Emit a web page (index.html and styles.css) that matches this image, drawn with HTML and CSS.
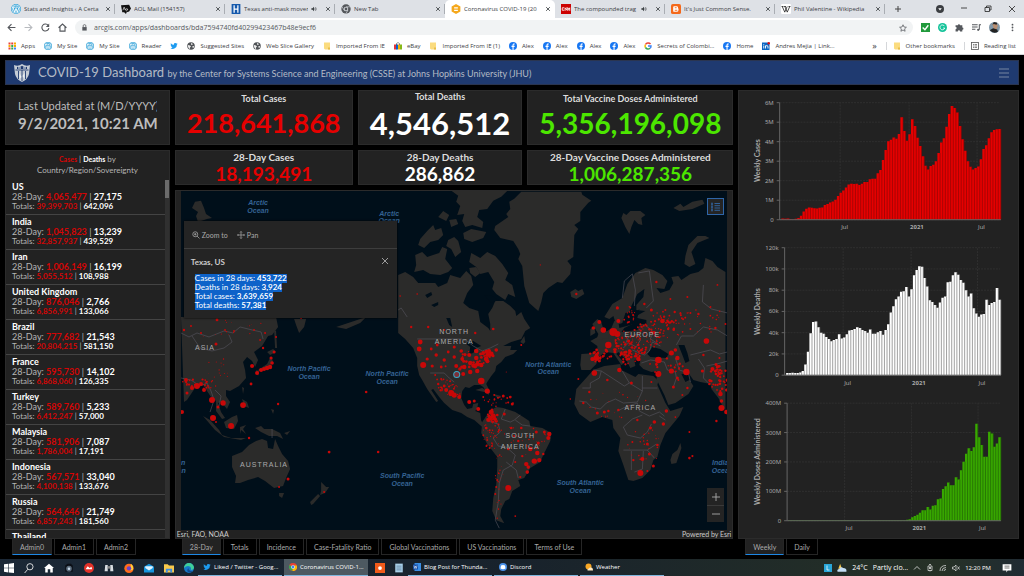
FILE: index.html
```html
<!DOCTYPE html>
<html lang="en">
<head>
<meta charset="utf-8">
<title>Coronavirus COVID-19 Dashboard</title>
<link rel="stylesheet" href="styles.css">
</head>
<body>
<svg class="defs" aria-hidden="true">
  <symbol id="wp" viewBox="0 0 16 16"><circle cx="8" cy="8" r="8" fill="#35a3d8"/><circle cx="8" cy="8" r="6.4" fill="none" stroke="#fff"/><path d="M3 5l3 8 2-6 2 6 3-8M2.500 5h4M7 5h4" fill="none" stroke="#fff" stroke-width="1.500"/></symbol>
  <symbol id="fb" viewBox="0 0 16 16"><circle cx="8" cy="8" r="8" fill="#1877f2"/><path d="M7 16v-6H5V7.500h2V6c0-2 1-3.200 3.200-3.200h1.300V5h-1.200C9.300 5 9.200 5.500 9.200 6.200v1.300h2.300L11.100 10H9.200v6z" fill="#fff"/></symbol>
  <symbol id="globe" viewBox="0 0 16 16"><circle cx="8" cy="8" r="7.500" fill="#505357"/><path d="M2 6l4 1 2 2-2 2v3C3 13 1.500 10 2 6zM8 2l4 2-2 2-2-1zM11 8l3 0-1 4-2-1z" fill="#eee"/></symbol>
  <symbol id="chrome" viewBox="0 0 16 16"><circle cx="8" cy="8" r="8" fill="#e94235"/><path d="M8 8L1 4.200A8 8 0 0 0 7 16z" fill="#34a853"/><path d="M8 8L7 16A8 8 0 0 0 15.500 5H8z" fill="#fbbc04"/><circle cx="8" cy="8" r="3.700" fill="#fff"/><circle cx="8" cy="8" r="2.800" fill="#4285f4"/></symbol>
  <symbol id="newtab" viewBox="0 0 16 16"><circle cx="8" cy="8" r="7.500" fill="#54575b"/><circle cx="8" cy="8" r="3.600" fill="#dee1e6"/><circle cx="8" cy="8" r="2.300" fill="#54575b"/><path d="M8 4.500h7M5 10L1.500 4M11 10l-3.500 6" stroke="#dee1e6"/></symbol>
  <symbol id="folder" viewBox="0 0 16 16"><path d="M2 1h12v14H4l-2-2z" fill="#fbdc7f"/><path d="M10 11h4v4h-4z" fill="#e8bd4a"/></symbol>
  <symbol id="twitter" viewBox="0 0 24 24"><path fill="#1d9bf0" d="M23 5a9 9 0 0 1-2.600.7 4.500 4.500 0 0 0 2-2.500 9 9 0 0 1-2.900 1.100A4.500 4.500 0 0 0 11.800 8.400 12.900 12.900 0 0 1 2.500 3.700a4.500 4.500 0 0 0 1.400 6 4.500 4.500 0 0 1-2-.6 4.500 4.500 0 0 0 3.600 4.500 4.500 4.500 0 0 1-2 .1 4.500 4.500 0 0 0 4.200 3.100A9.100 9.100 0 0 1 1 18.700a12.900 12.900 0 0 0 19.800-11.500A9 9 0 0 0 23 5z"/></symbol>
  <symbol id="x" viewBox="0 0 16 16"><path d="M3 3l10 10M13 3L3 13" stroke="currentColor" stroke-width="2.200"/></symbol>
  <symbol id="sound" viewBox="0 0 16 16"><path d="M1 6h3l4-4v12L4 10H1z" fill="currentColor"/><path d="M10 5q2 3 0 6M12 3q4 5 0 10" fill="none" stroke="currentColor" stroke-width="1.500"/></symbol>
</svg>

<header class="browser">
  <nav class="tabs" aria-label="Browser tabs">
    <div class="tab"><svg class="fav"><use href="#wp"/></svg><span>Stats and Insights ‹ A Certa</span><button aria-label="Close tab"><svg><use href="#x"/></svg></button></div>
    <div class="tab"><svg class="fav" viewBox="0 0 16 16"><path d="M0 2l13-1 3 6-3 5-4 1-1 3-3-3H2z" fill="#111"/><path d="M3 10l2-5 2 5M9 7.500a1.500 1.500 0 1 0 .1 0" fill="none" stroke="#fff"/></svg><span>AOL Mail (154157)</span><button aria-label="Close tab"><svg><use href="#x"/></svg></button></div>
    <div class="tab"><svg class="fav" viewBox="0 0 16 16"><rect x="1" width="14" height="16" fill="#1459ac"/><path d="M5 2v12M11 2v12M4 8h8" stroke="#fff" stroke-width="2"/></svg><span>Texas anti-mask mover</span><svg class="audio"><use href="#sound"/></svg><button aria-label="Close tab"><svg><use href="#x"/></svg></button></div>
    <div class="tab"><svg class="fav"><use href="#newtab"/></svg><span>New Tab</span><button aria-label="Close tab"><svg><use href="#x"/></svg></button></div>
    <div class="tab active"><svg class="fav" viewBox="0 0 16 16"><path d="M8 0l7 4v8l-7 4-7-4V4z" fill="#f5a81c"/><path d="M5 5h6v2H5zM5 9h6v2H5z" fill="#fff"/></svg><span>Coronavirus COVID-19 (20</span><button aria-label="Close tab"><svg><use href="#x"/></svg></button></div>
    <div class="tab"><svg class="fav" viewBox="0 0 16 16"><rect width="16" height="16" fill="#c00"/><path d="M5 6H2v4h3M6.500 11V6l3 4V5M11 11V6l1.500 3L14 6v5" fill="none" stroke="#fff" stroke-width="1.300"/></svg><span>The compounded trag</span><svg class="audio"><use href="#sound"/></svg><button aria-label="Close tab"><svg><use href="#x"/></svg></button></div>
    <div class="tab"><svg class="fav" viewBox="0 0 16 16"><rect width="16" height="16" rx="3" fill="#f4681a"/><path d="M5 3.500h4a2 2 0 0 1 2 3q1.500.5 1 3a3 3 0 0 1-3 3H5q-1.500 0-1.500-1.500V5q0-1.500 1.500-1.500z" fill="#fff"/><path d="M6 6h3M6 10h4" stroke="#f4681a" stroke-width="1.500"/></svg><span>It's Just Common Sense.</span><button aria-label="Close tab"><svg><use href="#x"/></svg></button></div>
    <div class="tab"><svg class="fav" viewBox="0 0 16 16"><rect width="16" height="16" rx="2" fill="#fff"/><path d="M2 4l4 9 2-5 2 5 4-9M6 4l2 4 2-4M1 4h3M5 4h3M12 4h3" fill="none" stroke="#111" stroke-width="1.200"/></svg><span>Phil Valentine - Wikipedia</span><button aria-label="Close tab"><svg><use href="#x"/></svg></button></div>
    <button class="plus" aria-label="New tab"><svg viewBox="0 0 16 16"><path d="M8 2v12M2 8h12" stroke="#444" stroke-width="2"/></svg></button>
    <div class="window">
      <button aria-label="Search tabs"><svg viewBox="0 0 16 16"><circle cx="8" cy="8" r="8" fill="#3a3d41"/><path d="M4.500 6.500h7L8 11z" fill="#fff"/></svg></button>
      <button aria-label="Minimise"><svg viewBox="0 0 16 16"><path d="M2 6h12" stroke="#222" stroke-width="1.600"/></svg></button>
      <button aria-label="Restore"><svg viewBox="0 0 16 16"><path d="M2 5h9v8H2zM5 5V2h9v8h-3" fill="none" stroke="#222" stroke-width="1.600"/></svg></button>
      <button aria-label="Close"><svg viewBox="0 0 16 16"><path d="M2 2l12 12M14 2L2 14" stroke="#222" stroke-width="1.600"/></svg></button>
    </div>
  </nav>
  <div class="toolbar">
    <button aria-label="Back"><svg viewBox="0 0 16 16"><path d="M15 8H2M8 2L2 8l6 6" fill="none" stroke="#55585d" stroke-width="2"/></svg></button>
    <button aria-label="Forward"><svg viewBox="0 0 16 16"><path d="M1 8h13M8 2l6 6-6 6" fill="none" stroke="#b8bbbf" stroke-width="2"/></svg></button>
    <button aria-label="Reload"><svg viewBox="0 0 16 16"><path d="M13 4.500A6.200 6.200 0 1 0 14 9" fill="none" stroke="#55585d" stroke-width="2"/><path d="M14.500 1v6h-6z" fill="#55585d"/></svg></button>
    <button aria-label="Home"><svg viewBox="0 0 16 16"><path d="M1 8.500L8 2l7 6.500M3.500 7v7.500h9V7" fill="none" stroke="#55585d" stroke-width="2"/></svg></button>
    <label class="address"><svg viewBox="0 0 16 16"><path d="M3 7h10v8H3z" fill="#55585d"/><path d="M5 7V4q0-2.500 3-2.500T11 4v3" fill="none" stroke="#55585d" stroke-width="1.800"/></svg>
      <input aria-label="Address" value="arcgis.com/apps/dashboards/bda7594740fd40299423467b48e9ecf6">
      <svg viewBox="0 0 16 16"><path d="M8 1.500l2 4.500 4.800.5-3.600 3.200 1 4.800L8 12l-4.200 2.500 1-4.800L1.200 6.500 6 6z" fill="none" stroke="#55585d" stroke-width="1.500"/></svg></label>
    <div class="extensions">
      <svg viewBox="0 0 16 16"><rect width="16" height="16" fill="#219a3c"/><path d="M3 8l4 4 6-8" fill="none" stroke="#fff" stroke-width="2.500"/></svg>
      <svg viewBox="0 0 16 16"><circle cx="8" cy="8" r="8" fill="#15c39a"/><path d="M11.500 5.500A4.300 4.300 0 1 0 12 9H9" fill="none" stroke="#fff" stroke-width="1.500"/></svg>
      <svg viewBox="0 0 16 16"><path d="M1 4h4a2 2 0 1 1 4 0h4v4a2 2 0 1 1 0 4v3H9a2 2 0 1 0-4 0H1v-4a2 2 0 1 0 0-4z" fill="#55585d"/></svg>
      <svg viewBox="0 0 16 16"><path d="M0 3h10M0 7h10M0 11h6M13 12V3h3" fill="none" stroke="#55585d" stroke-width="1.800"/><circle cx="11" cy="12" r="2" fill="#55585d"/></svg>
      <svg class="avatar" viewBox="0 0 16 16"><circle cx="8" cy="8" r="8" fill="#8298a8"/><path d="M5 3l5-2 3 4-2 6-4-1z" fill="#b98f72"/><path d="M1 12l5-3 6 2 1 3q-6 4-12-2zM5 4l2-4 5 1-1 3-4-1z" fill="#222"/></svg>
      <svg viewBox="0 0 16 16"><g fill="#55585d"><circle cx="8" cy="3" r="1.600"/><circle cx="8" cy="8" r="1.600"/><circle cx="8" cy="13" r="1.600"/></g></svg>
    </div>
  </div>
  <nav class="bookmarks" aria-label="Bookmarks">
    <a href="#"><svg viewBox="0 0 16 16"><path d="M1 1h4v4H1zM1 11h4v4H1zM6.500 1h4v4h-4z" fill="#ea4335"/><path d="M12 1h4v4h-4zM12 6h4v4h-4zM1 6h4v4H1z" fill="#f9ab00"/><path d="M6.500 6h4v4h-4zM6.500 11h4v4h-4z" fill="#34a853"/><path d="M12 11h4v4h-4z" fill="#4285f4"/></svg>Apps</a>
    <a href="#"><svg><use href="#wp"/></svg>My Site</a>
    <a href="#"><svg><use href="#wp"/></svg>My Site</a>
    <a href="#"><svg><use href="#wp"/></svg>Reader</a>
    <a href="#" aria-label="Twitter"><svg><use href="#twitter"/></svg></a>
    <a href="#"><svg><use href="#globe"/></svg>Suggested Sites</a>
    <a href="#"><svg><use href="#globe"/></svg>Web Slice Gallery</a>
    <a href="#"><svg><use href="#folder"/></svg>Imported From IE</a>
    <a href="#"><svg viewBox="0 0 16 16"><path d="M0 5h5v10H0z" fill="#e53238"/><path d="M4 5h4v10H4z" fill="#0064d2"/><path d="M8 5h4v10H8z" fill="#f5af02"/><path d="M12 5h4v10h-4z" fill="#86b817"/><path d="M5 6V3q3-4 6 0v3" fill="none" stroke="#333"/></svg>eBay</a>
    <a href="#"><svg><use href="#folder"/></svg>Imported From IE (1)</a>
    <a href="#"><svg><use href="#fb"/></svg>Alex</a>
    <a href="#"><svg><use href="#fb"/></svg>Alex</a>
    <a href="#"><svg><use href="#fb"/></svg>Alex</a>
    <a href="#"><svg><use href="#fb"/></svg>Alex</a>
    <a href="#"><svg viewBox="0 0 16 16" fill="none" stroke-width="3"><path d="M13 4A6 6 0 0 0 3 5" stroke="#ea4335"/><path d="M3 5a6 6 0 0 0 0 6" stroke="#fbbc04"/><path d="M3 11a6 6 0 0 0 9 1.500" stroke="#34a853"/><path d="M12 12.500Q14 11 14 8H8" stroke="#4285f4"/></svg>Secrets of Colombi...</a>
    <a href="#"><svg><use href="#fb"/></svg>Home</a>
    <a href="#"><svg viewBox="0 0 16 16"><rect y="1" width="15" height="15" fill="#0a66c2"/><path d="M3.500 7v6M7 13V7M7 10q0-3 2.500-3T12 10v3M3.500 4v1.500" fill="none" stroke="#fff" stroke-width="1.800"/><circle cx="13.500" cy="2.500" r="2.500" fill="#d11"/></svg>Andres Mejia | Link...</a>
    <button class="more" aria-label="More bookmarks">»</button>
    <a href="#" class="ruled"><svg><use href="#folder"/></svg>Other bookmarks</a>
    <a href="#" class="ruled"><svg viewBox="0 0 16 16"><rect x="1" y="1" width="14" height="14" fill="none" stroke="#555" stroke-width="1.600"/><path d="M4 5h2M4 8h2M4 11h2M7 5h5M7 8h5M7 11h5" stroke="#555" stroke-width="1.400"/></svg>Reading list</a>
  </nav>
</header>

<main class="dashboard">
  <header class="banner">
    <svg class="crest" viewBox="0 0 18 18"><path d="M1 1q4 2 8-1 4 3 8 1l-1 9q-1 5-7 8-6-3-7-8z" fill="#c5ccd5"/><path d="M2.500 6h13M9 6v11M5.500 7v8M12.500 7v8" stroke="#1f3a70" stroke-width=".9"/><path d="M4 2.800q3 1 5-1 2 2 5 1V5H4z" fill="#1f3a70"/><path d="M5 3.500h3v1H5zM10 3.500h3v1h-3zM6.500 9l2 4-2 2zM11.500 9l-2 3 2 3z" fill="#eef1f4"/></svg>
    <h1>COVID-19 Dashboard <small>by the Center for Systems Science and Engineering (CSSE) at Johns Hopkins University (JHU)</small></h1>
    <button aria-label="Menu"><svg viewBox="0 0 10 10"><path d="M0 1h10M0 5h10M0 9h10" stroke="#8d99ae" stroke-width=".8"/></svg></button>
  </header>

  <section class="column side">
    <div class="card updated"><p>Last Updated at (M/D/YYYY)</p><strong>9/2/2021, 10:21 AM</strong></div>
    <div class="card countries">
      <h2><span><b class="red">Cases</b> | <b>Deaths</b> by</span><span>Country/Region/Sovereignty</span></h2>
      <ul id="countries"></ul>
    </div>
    <nav class="switch indent"><button class="on">Admin0</button><button>Admin1</button><button>Admin2</button></nav>
  </section>

  <section class="column centre">
    <div class="totals">
      <div class="card stat"><h3>Total Cases</h3><strong class="red">218,641,868</strong></div>
      <div class="card stat large"><h3>Total Deaths</h3><strong>4,546,512</strong></div>
      <div class="card stat medium"><h3>Total Vaccine Doses Administered</h3><strong class="green">5,356,196,098</strong></div>
      <div class="card stat short"><h3>28-Day Cases</h3><strong class="red">18,193,491</strong></div>
      <div class="card stat short"><h3>28-Day Deaths</h3><strong>286,862</strong></div>
      <div class="card stat short"><h3>28-Day Vaccine Doses Administered</h3><strong class="green">1,006,287,356</strong></div>
    </div>
    <div class="card mapcard">
      <svg class="map" viewBox="181 191 546 339" preserveAspectRatio="xMidYMid slice" role="img" aria-label="World map of cases">
        <g class="land">
          <path d="M398 275l7-3 8 5 5 6 17 0 3 4 9-4 3-8 10 3 6-7 5 5 2 9-6 8-4 10 6 5 9 3 2 11 8 6 2 3 0-7-2-10 4-6 3-7 8 0 7 5 5 5 1 5 5-4 3 7 6 9-5 3-4 8-10 3-8 4 8 0-1 4 7 0-4 4-8 3-4 5-5 4-1 5-4 5-4 6-1 2 4 8-2 3-5-8-3-2-6 0-5 3-4-1-3 4-1 7 3 7 3 4 5-1 1-4 5-1-1 5-2 3 5 2 1 8 4 4 4 0 4 3-3 2-8-3-8-7-7-3-6-4-9-3-8-7-5-6-6-8-2 1 7 11-2 1-9-13-5-9-3-5-2-9 0-8-4-10-8-9-7-6z"/>
          <path d="M510 209l-4 5 2 3-13 9-1 4 6 8 13 3 5 8 2 5-2 5 4 7 2 20 5 17 9 8 3-9 2-9 5-5 9-6 5 1 8-9 1-8-4-5 6-4 1-22 4-6-4-4 6-4 0-9 8-9 3-2-9-6-1-3h-60l-7 7-5 3z"/>
          <path d="M450 190h58l-7 7-8 4-6 8-8 1-2 7 6 5-1 6-10-3-7 2-3-6 2-7-7 1 3-9-4-4 2-6zM463 233l8-4 15 3-3 6-11 4-8-3zM471 253l9 5 7-6 8 4 7 8 6 9-3 7 7 5 3 12-7-3-3 6-9-6-4-5 2-7-6-10-8 2-4-7-7-5z"/>
          <path d="M415 255l7-3 5 5 12-4 3-6 5 2-2 10 7 9-4 4-8 3-10-1-7-4-9 2 2-7zM420 239l7-8 6-6 2 5 6-2 2 7-5 5-8 2-6 6-6-3zM438 217l5-6 6 4-3 6zM449 220l7-1 2 5-7 3zM448 240l6-3 4 4 3 11-6 5-4-8-5-3zM469 268l7-1 4 6-5 4-5-4z"/>
          <path d="M570 292l5-3 3 2 4-2 2 5-8 5-5-2zM621 218l2-5 3 2 4-4 10 0 5 4-4 3 1 7-4-1-4-4-3 7-2 7-4-7zM673 208l7-4 3 3 9-5 10-2 2 4-12 5-13 2zM684 264l1-8 3-11 9-9 8 0 4 2-12 5-6 9 4 12-6 3z"/>
          <path d="M612 304l10-6 5-14 8-11 10-5 8 2 9 5 5 6-3 8-8-1 4 5 9-3 4-7-2-6 7-1 3 4 9-6 8-2 5-4 2-10 7 3 5 6 8 5V411l-3-5-4-8-7-9-1-5-10-2-7-2-5-7-7 1 4 8 4-2 4 6-5 8-13 9-7 2-4-10-8-16 2-8-7 1-8-3-4-4 1-6-6 1 1 6-5 2-4-8-8-8-2 2 8 9-3 2-8-12-8-1-7 5-2 7-6 6-9 0-1-5 1-11 16-1 0-7-7-5 13-7 8-6 3-7 4 1 1 6 11-3 8-3-2-6 9-5-9-1 0-5 7-8 1-8-7 5-6 12-2 6-4 1-3 10-6 2-3-9-4 3-5-2z"/>
          <path d="M592 324l5-5 4 3 2 7 6 4-1 5-12 2 2-6zM590 329l4-2 1 6-5 3z"/>
          <path d="M593 370l11-4 16-2 1 6 14 7 3-3 15 2 5 5-1 4 8 18 5 8 13-4-4 9-14 17-5 12-3 12-4 3-3 10-8 8-9 3-5-1-5-15-5-14 2-13-7-10-1-8-10-3-12 5-11-8-5-10 2-15zM672 454l5-4 3-7 1 5-5 15-5 1-1-4z"/>
          <path d="M491 410l5-3 7 1 12 4 8 5 6 4 1 5 12 2 9 5-1 8-7 14-3 7-10 6-6 10-6 2 2 6-8 5-3 8-4 2-4 8-1 7 4 7-8-3-4-9 1-13 3-14 1-17 0-10-10-13-6-11 1-11 4-6z"/>
          <path d="M181 317h95l2 10-6 8-4 1-6 10-8 6 4 8-3 7-3-6-5-4-4 5 2 8 1 8-7 8-9 5-4-1 0 6 4 6-3 7-6-7-3 1 3 9 4 6-3 1-6-8 0-10-5-4-8-12-8 3-8 12-3 2z"/>
          <path d="M294 319h12l-2 8-5 6-3-8zM274 330l2 1 1 17-2 0zM267 352l6-3 3 3-6 3zM271 356l2 6-6 7-8 2-1-1 9-6zM256 370l3 1-1 5zM336 327l18-6 12-4-6 6-14 6zM242 387l2 1-1 6zM242 399l5 3 2 6-5-2z"/>
          <path d="M203 416l7 4 9 10 3 5 9 3 15 0-5 2-17-3-9-7zM224 422l8-5 5-2 1 6-4 8-8-1zM240 427l6-2-3 4 3 5-5-4-1 4zM255 428l6-2 3 3 8 0 8 4 3 6-6-3-8 0-8-4zM284 433l6-2-3 4zM195 202l6-1 3 7 2 6 6 4-5 1-9 3-2-6 2-4-6-4zM271 409l3 1-1 4z"/>
          <path d="M232 456l10-4 7-7 7-4 6-2 5 2 1 7 5 1 2-10 3 7 4 8 6 7 2 8-4 9-3 8-9 2-9-7-7-4-10 3-8 3-5 0 1-7-4-9zM279 493l5 0-2 5-3-2zM321 482l5 5 3 0-4 6-5 2 1-4zM318 494l2 2-7 8-2 1-1-3z"/>
          <path d="M475 390l7-2 7 4-5 0zM493 394l8 2-3 3zM520 342l4-6 1 6-2 2z"/>
        </g>
        <g class="sea"><path d="M647 354l5-7 8 2 8 5-2 4-16-1zM678 345l6 0 3 8 2 8-4 2-3-8zM621 332l16-2 3-6 6 0 0-4-9-2 2-9-4 5-3 10-8 4zM484 295l8 1 6 4-7 3zM425 295l6-3 1 3-5 3zM431 305l7-3 0 3-4 2zM446 318l4 0 2 9-3-2zM465 343l8-2 8 5-5 2-3 5-4 1 1-7z"/></g>
        <g class="borders"><path d="M417 339h44l7 3 5 4 9 5 8-3 8-4M398 310l3-2 6 9M430 373l14 0 5 5 5 4M181 333l8 4 8-4 12 4 15-6 9 2 7-6 12 3 9 2 2 7M192 336l8 12 12 3 12-3 8-6-3-7M181 378l10 2 9 6 7-3 4 8 3 9-4 12M215 390l6 6-2 10M272 429v9M505 409l-4 10 9 3 4-2 6-5M488 421l10 3 2 8-7 6 5 8 8 1 9 8-3 10-9 5-4 13-1 19-3 18 4 8M506 462l10 8 2 8M515 420l7 5 8 1M593 370l8 1-2 7-9 5v5h-8M601 371l23 15 5-3-7-12M629 383l13 8V376M642 388h15M642 391l-5 11-14 1-8-4-9 4-6 6-9-2-5-5-7-1M617 411l8-4 12-4 2 8 10 5 10-4 5 4M659 416l6 4M642 415l-10 4-9 8 4 8 13 3 7-6 4-8M623 450h24l9-6M631 451v19M643 451l-1 18-8 3M647 450l7 8M623 348l5-5 8 4 4-7-3-6-9 3-3 7M632 350l12 5 5-4 3-9 8 4M622 298l2-17 8-7 3 16-1 16M638 273l11-2 4 30-7 7M646 326l7 6-3 7 8 5M641 363l9-3 14 2 3 8 8 2 1 6-3 9M675 358l4 12 9 3 2 9M676 345l5-9 12 0 10-9 14 3 10 6M703 285l-1 17 9 7 16 4M690 355l12-3 8-2 9 4 8-2M698 359l6 9-1 10 5 5M706 366l14-3 7-2"/></g>
        <g id="cases" class="cases"></g>
        <circle cx="456.500" cy="374.500" r="3" class="picked"/>
        <g class="ocean">
          <text><tspan x="258" y="205">Arctic</tspan><tspan x="258" y="213">Ocean</tspan></text>
          <text><tspan x="389" y="216">Arctic</tspan><tspan x="389" y="223">Ocean</tspan></text>
          <text><tspan x="309" y="371">North Pacific</tspan><tspan x="309" y="379">Ocean</tspan></text>
          <text><tspan x="387" y="376">North Pacific</tspan><tspan x="387" y="384">Ocean</tspan></text>
          <text><tspan x="548" y="367">North Atlantic</tspan><tspan x="548" y="374">Ocean</tspan></text>
          <text><tspan x="402" y="478">South Pacific</tspan><tspan x="402" y="486">Ocean</tspan></text>
          <text><tspan x="580" y="485">South Atlantic</tspan><tspan x="580" y="493">Ocean</tspan></text>
          <text><tspan x="722" y="465">Indian</tspan><tspan x="722" y="473">Ocean</tspan></text>
          <text><tspan x="175" y="465">Indian</tspan><tspan x="175" y="473">Ocean</tspan></text>
        </g>
        <g class="continent">
          <text x="205" y="350">ASIA</text><text x="264" y="467">AUSTRALIA</text>
          <text><tspan x="454" y="334">NORTH</tspan><tspan x="454" y="344">AMERICA</tspan></text>
          <text><tspan x="520" y="438">SOUTH</tspan><tspan x="520" y="449">AMERICA</tspan></text>
          <text x="642" y="337">EUROPE</text><text x="640" y="410">AFRICA</text>
        </g>
      </svg>
      <div class="attribution"><span>Esri, FAO, NOAA</span><span>Powered by Esri</span></div>
      <article class="popup">
        <div class="actions">
          <button><svg viewBox="0 0 16 16"><circle cx="6.500" cy="6.500" r="5" fill="none" stroke="#aaa" stroke-width="1.500"/><path d="M10 10l5 5M4 6.500h5M6.500 4v5" stroke="#aaa" stroke-width="1.500"/></svg>Zoom to</button>
          <button><svg viewBox="0 0 16 16"><path d="M8 1v14M1 8h14M6 3l2-2 2 2M6 13l2 2 2-2M3 6L1 8l2 2M13 6l2 2-2 2" fill="none" stroke="#aaa" stroke-width="1.400"/></svg>Pan</button>
        </div>
        <h2>Texas, US</h2>
        <button class="dismiss" aria-label="Close popup"><svg viewBox="0 0 8 8"><path d="M1 1l6 6M7 1L1 7" stroke="#aaa" stroke-width=".9"/></svg></button>
        <p><mark>Cases in 28 days: <b>453,722</b></mark><mark>Deaths in 28 days: <b>3,924</b></mark><mark>Total cases: <b>3,639,659</b></mark><mark>Total deaths: <b>57,381</b></mark></p>
      </article>
      <button class="legend" aria-label="Legend"><svg viewBox="0 0 10 10"><path d="M1 .5v9M3.500 1.500H9M3.500 3.700H9M3.500 6H9M3.500 8.300H9" stroke="#3571b8" stroke-width=".8"/><path d="M0 2h2M0 5h2M0 8h2" stroke="#3571b8" stroke-width=".8"/></svg></button>
      <div class="zoom"><button aria-label="Zoom in"><svg viewBox="0 0 8 8"><path d="M4 0v8M0 4h8" stroke="#aaa" stroke-width=".9"/></svg></button><button aria-label="Zoom out"><svg viewBox="0 0 8 8"><path d="M0 4h8" stroke="#aaa" stroke-width=".9"/></svg></button></div>
    </div>
    <nav class="switch indent"><button class="on">28-Day</button><button>Totals</button><button>Incidence</button><button>Case-Fatality Ratio</button><button>Global Vaccinations</button><button>US Vaccinations</button><button>Terms of Use</button></nav>
  </section>

  <section class="column side">
    <div class="card charts" id="charts"></div>
    <nav class="switch indent"><button class="on">Weekly</button><button>Daily</button></nav>
  </section>
</main>

<footer class="taskbar">
  <div class="pins">
    <button aria-label="Start"><svg viewBox="0 0 16 16"><path d="M0 2l7-1v6.500H0zM8 1l8-1v7.500H8zM0 8.500h7V15l-7-1zM8 8.500h8V16l-8-1z" fill="#fff"/></svg></button>
    <button aria-label="Search"><svg viewBox="0 0 16 16"><circle cx="9.500" cy="6" r="5" fill="none" stroke="#eee" stroke-width="1.400"/><path d="M6 10l-5 6" stroke="#eee" stroke-width="1.400"/></svg></button>
    <button aria-label="Home"><svg viewBox="0 0 16 16"><path d="M0 8l8-7 8 7h-2v7h-4v-5H6v5H2V8z" fill="#fff"/></svg></button>
    <button aria-label="Camera"><svg viewBox="0 0 16 16"><path d="M2 4l4-3h5l3 3v10H2z" fill="#0b0f16"/><circle cx="8" cy="9" r="4.500" fill="#5c6c7c"/><circle cx="8" cy="9" r="2" fill="#c7d7e7"/></svg></button>
    <button aria-label="Security"><svg viewBox="0 0 16 16"><circle cx="8" cy="8" r="8" fill="#e23128"/><path d="M3 9l3-4 3 3 3-2 1 4H3z" fill="#fff"/></svg></button>
    <button aria-label="Binoculars"><svg viewBox="0 0 16 16"><path d="M2 3h4v10H1zM10 3h4l1 10h-5z" fill="#d8dde2"/><path d="M6 5h4v4H6z" fill="#888"/></svg></button>
    <button aria-label="Firefox"><svg viewBox="0 0 16 16"><circle cx="8" cy="8.500" r="7.500" fill="#ff6b1a"/><path d="M11 1q5 4 3 10l-4 1z" fill="#ffd23a"/><circle cx="8" cy="8.500" r="3.500" fill="#6a43c9"/></svg></button>
    <button aria-label="Mail"><svg viewBox="0 0 16 16"><path d="M0 6l8-5 8 5v9H0z" fill="#1594dd"/><path d="M2 5h12v3l-6 4-6-4z" fill="#dff2ff"/></svg></button>
    <button aria-label="Files"><svg viewBox="0 0 16 16"><path d="M0 2h6l2 2h8v11H0z" fill="#f8c94c"/><path d="M3 9h10v6h-3v-3H6v3H3z" fill="#3e8de0"/></svg></button>
    <button aria-label="Edge"><svg viewBox="0 0 16 16"><circle cx="8" cy="8" r="8" fill="#1678c9"/><path d="M0 8a8 8 0 0 1 16 0q-1 3-5 3 1-5-3-6T0 8z" fill="#3fcf9a"/><path d="M7 8q0 5 7 5-4 4-8 1-2-3 1-6z" fill="#124c91"/></svg></button>
  </div>
  <button class="task"><svg><use href="#twitter"/></svg>Liked / Twitter - Goog...</button>
  <button class="task current"><svg><use href="#chrome"/></svg>Coronavirus COVID-1...</button>
  <div class="pins pair">
    <button aria-label="Reader"><svg viewBox="0 0 16 16"><rect width="16" height="16" fill="#f05a1a"/><circle cx="8" cy="8" r="3" fill="#fff"/></svg></button>
    <button aria-label="Notepad"><svg viewBox="0 0 16 16"><path d="M2 1h12v14H2z" fill="#a8cfe8"/><path d="M4 5h8M4 8h8M4 11h8" stroke="#496c8c"/></svg></button>
  </div>
  <button class="task"><svg viewBox="0 0 16 16"><path d="M3 0h13v16H3z" fill="#3a8ee6"/><path d="M0 3h10v10H0z" fill="#174ea6"/><path d="M2 5l1.500 6L5 6l1.500 5L8 5" fill="none" stroke="#fff"/></svg>Blog Post for Thunda...</button>
  <button class="task"><svg viewBox="0 0 16 16"><circle cx="8" cy="8" r="8" fill="#4a90e8"/><path d="M4 5q4-2 8 0l1 6q-5 3-10 0z" fill="#fff"/></svg>Discord</button>
  <button class="task"><svg viewBox="0 0 16 16"><circle cx="7" cy="7" r="6" fill="#f9a825"/><path d="M5 15q-1-4 3-4 1-3 4-2 4 0 4 6z" fill="#ffe9c0"/></svg>Weather</button>
  <div class="tray">
    <svg viewBox="0 0 16 16"><rect width="16" height="16" fill="#29a6d8"/><path d="M6 3v9h5" fill="none" stroke="#fff" stroke-width="1.500"/></svg>
    <svg class="big" viewBox="0 0 16 16"><path d="M5 1l3 8H2z" fill="#f7c84b"/><path d="M1 14q-2-4 3-5 2-4 6-1 6 0 5 6z" fill="#c4def5"/></svg>
    <span>24°C</span><span>Partly clo...</span>
    <svg viewBox="0 0 16 16"><path d="M2 11l6-6 6 6" fill="none" stroke="#eee" stroke-width="1.500"/></svg>
    <svg viewBox="0 0 16 16"><path d="M4 4h8v9H4zM6 1h4M8 15v-2" fill="none" stroke="#eee" stroke-width="1.400"/><circle cx="8" cy="8" r="2" fill="#eee"/></svg>
    <svg viewBox="0 0 16 16"><path d="M2 14Q2 3 14 3M6 14q0-7 8-7M10 14q0-3 4-3" fill="none" stroke="#eee" stroke-width="1.400"/></svg>
    <svg viewBox="0 0 16 16"><path d="M1 6h3l4-4v12L4 10H1zM11 5l4 6M15 5l-4 6" fill="none" stroke="#eee" stroke-width="1.300"/></svg>
    <time>12:20 PM</time>
    <svg class="big" viewBox="0 0 16 16"><path d="M1 2h14v10H9l-2 3v-3H1z" fill="#fff"/><path d="M4 5h8M4 8h8" stroke="#222"/></svg>
  </div>
</footer>
<script src="script.js"></script>
</body>
</html>
```
FILE: styles.css
```css
* { box-sizing: border-box; }
body { margin: 0; height: 100vh; display: flex; flex-direction: column; overflow: hidden; background: #000; color: #fff; font-family: Lato, "Open Sans", sans-serif; }
h1, h2, h3, p, ul { margin: 0; padding: 0; font-weight: 400; }
button { padding: 0; border: 0; background: none; color: inherit; font: inherit; display: flex; align-items: center; }
svg { display: block; flex: none; }
.defs { position: absolute; width: 0; height: 0; }
.red { color: #e60000; }
.green { color: #4ce600; }

/* Browser */
.browser { flex: none; background: #fff; color: #3c4043; font-family: "Open Sans", sans-serif; font-size: 6px; border-bottom: 1px solid #d5d7da; }
.tabs { display: flex; height: 18px; padding-left: 5px; background: #dee1e6; }
.tab { flex: 0 1 110px; min-width: 0; display: flex; align-items: center; gap: 3px; padding: 0 4px 0 6px; position: relative; }
.tab:not(.active)::after { content: ""; position: absolute; right: 0; top: 4px; height: 10px; width: 1px; background: #a9adb3; }
.tab span { flex: 1; overflow: hidden; white-space: nowrap; }
.tab button, .tab button svg, .audio { width: 6px; height: 6px; }
.audio { margin-right: 5px; }
.tab.active { background: #fff; border-radius: 5px 5px 0 0; }
.fav { width: 10px; height: 10px; }
.plus { margin-left: 9px; }
.plus svg { width: 8px; height: 8px; }
.window { margin-left: auto; display: flex; gap: 16px; padding-right: 8px; }
.window svg { width: 8px; height: 8px; }
.toolbar { display: flex; align-items: center; gap: 8px; height: 19px; padding: 0 7px; }
.toolbar button svg, .extensions svg { width: 9px; height: 9px; }
.address { flex: 1; display: flex; align-items: center; gap: 6px; height: 15px; padding: 0 6px; border-radius: 8px; background: #f1f3f4; }
.address svg { width: 7px; height: 7px; }
.address svg:last-child { width: 8px; height: 8px; }
.address input { flex: 1; min-width: 0; border: 0; padding: 0; background: none; color: #55585d; font: 7px "Open Sans", sans-serif; outline: 0; }
.extensions { display: flex; align-items: center; gap: 8px; }
.extensions .avatar { width: 11px; height: 11px; }
.bookmarks { display: flex; align-items: center; gap: 9px; height: 17px; padding: 0 8px; white-space: nowrap; }
.bookmarks a { display: flex; align-items: center; gap: 5px; color: inherit; text-decoration: none; }
.bookmarks svg { width: 8px; height: 8px; }
.more { margin-left: auto; font-size: 9px; }
.ruled { padding-left: 6px; border-left: 1px solid #d5d7da; }

/* Dashboard */
.dashboard { flex: 1; min-height: 0; display: grid; grid-template: 25px minmax(0, 1fr) / 165fr 559fr 281fr; gap: 5px; padding: 5px 5px 4px; }
.banner { grid-column: 1 / -1; display: flex; align-items: center; gap: 7px; padding: 0 9px 0 7px; background: #1f3a70; border: 1px solid #2a3550; color: #b3bac5; }
.crest { width: 18px; height: 18px; }
.banner h1 { flex: 1; font-size: 13px; line-height: 18px; white-space: nowrap; }
.banner small { font-size: 9px; }
.banner button svg { width: 10px; height: 10px; }
.column { min-width: 0; min-height: 0; display: flex; flex-direction: column; }
.card { background: #222; border: 1px solid #2b2b2b; min-width: 0; }
.updated { height: 55px; margin-bottom: 5px; padding: 7px 12px; color: #bdbdbd; display: flex; flex-direction: column; white-space: nowrap; }
.updated p { font-size: 11px; line-height: 15px; overflow: hidden; }
.updated strong { font-size: 15px; line-height: 20px; }
.countries { flex: 1; min-height: 0; display: flex; flex-direction: column; font-size: 9px; color: #b5b5b5; }
.countries h2 { height: 29px; padding-top: 3px; font-size: 8px; line-height: 11px; text-align: center; }
.countries h2 span { display: block; }
.countries h2 b { font-size: 7px; }
.countries h2 b:not(.red) { color: #fff; }
.countries ul { flex: 1; min-height: 0; overflow: hidden; list-style: none; background: linear-gradient(#6b6b6b, #6b6b6b) right top / 4px 18px no-repeat, linear-gradient(#303030, #303030) right / 4px 100% no-repeat; }
.countries li { height: 35px; margin-right: 4px; padding: 2px 6px 0; border-bottom: 1px solid #444; white-space: nowrap; }
.countries li div { line-height: 10px; }
.countries li .all { font-size: 8px; line-height: 9px; }
.countries b { color: #fff; }
.countries b.red { color: #d40505; }
.switch { display: flex; gap: 2px; height: 16px; font-size: 7px; color: #aaa; }
.indent { padding-left: 7px; }
.switch button { padding: 0 7px; border: 1px solid #262626; border-top: 0; white-space: nowrap; }
.switch .on { background: #222; border-bottom: 1px solid #1e88e5; }

.totals { display: grid; grid-template: 55px 35px / 178fr 165fr 206fr; gap: 5px; margin-bottom: 5px; }
.stat { display: flex; flex-direction: column; align-items: center; padding-top: 3px; white-space: nowrap; }
.stat h3 { font-size: 9px; line-height: 10px; font-weight: 700; color: #ddd; }
.stat strong { font-size: 27px; line-height: 38px; }
.stat.medium strong { font-size: 28px; }
.stat.large { padding-top: 1px; }
.stat.large strong { font-size: 31px; line-height: 42px; }
.stat.short { padding-top: 0; }
.stat.short h3 { font-size: 10px; line-height: 12px; }
.stat.short strong { font-size: 19px; line-height: 21px; }

.mapcard { flex: 1; min-height: 0; position: relative; display: flex; flex-direction: column; padding: 0 5px; }
.map { flex: 1; min-height: 0; width: 100%; background: #000f1a; }
.attribution { display: flex; justify-content: space-between; margin: 0 -4px; font-size: 7px; line-height: 8px; color: #ccc; }
.land path { fill: #2b2b2a; }
.sea path { fill: #000f1a; }
.borders path { fill: none; stroke: #57565f; stroke-width: .6; }
.cases circle { fill: #c90808; }
.picked { fill: #7d3038; stroke: #3aa7c4; stroke-width: 1; }
.ocean, .continent { font: italic 700 7px "Liberation Sans", sans-serif; fill: #356394; text-anchor: middle; }
.continent { font-style: normal; font-weight: 400; fill: #aaa; letter-spacing: 1px; }
.popup { position: absolute; left: 8px; top: 30px; width: 213px; height: 97px; background: #242424; color: #aaa; font-size: 7px; box-shadow: 0 0 2px #000; }
.actions { display: flex; gap: 9px; height: 28px; padding: 0 8px; border-bottom: 1px solid #3d3d3d; }
.actions button { gap: 2px; }
.actions svg { width: 8px; height: 8px; }
.popup h2 { padding: 7px 7px 6px; font-size: 8px; line-height: 12px; font-weight: 700; color: #ccc; }
.popup p { display: flex; flex-direction: column; align-items: flex-start; padding-left: 11px; font-size: 8px; line-height: 9px; }
.popup mark { background: #0d62c9; color: #fff; }
.dismiss { position: absolute; right: 8px; top: 36px; }
.dismiss svg { width: 8px; height: 8px; }
.legend { position: absolute; right: 8px; top: 7px; width: 17px; height: 17px; justify-content: center; background: #242424; border: 1px solid #2f66a8; }
.legend svg { width: 10px; height: 10px; }
.zoom { position: absolute; right: 8px; bottom: 16px; }
.zoom button { width: 17px; height: 17px; justify-content: center; background: #242424; }
.zoom button + button { border-top: 1px solid #3a3a3a; }
.zoom svg { width: 8px; height: 8px; }

.charts { flex: 1; min-height: 0; display: flex; flex-direction: column; }
.charts svg { min-height: 0; width: 100%; }
.charts text { font: 6px "Noto Sans", sans-serif; fill: #aaa; }
.charts .title { font: 700 7px Lato, sans-serif; text-anchor: middle; }
.charts .value { text-anchor: end; }
.charts .year { font-weight: 700; }
.grid { fill: none; stroke: #303030; stroke-width: 1; stroke-dasharray: 2 1; }
.axis { fill: none; stroke: #666; stroke-width: 1; }

/* Taskbar */
.taskbar { flex: none; display: flex; align-items: stretch; height: 17px; padding-left: 4px; background: linear-gradient(90deg, #1b2836, #18222c 50%, #263126 92%, #202b33); font: 6px "Open Sans", sans-serif; white-space: nowrap; }
.pins { display: flex; gap: 10px; margin-right: 4px; }
.pins svg { width: 10px; height: 10px; }
.pair { gap: 9px; margin: 0 4px 0 5px; }
.task { flex: 0 1 84px; min-width: 0; overflow: hidden; gap: 3px; margin-right: 2px; padding: 0 5px; border-bottom: 1px solid #7fb6dd; }
.task svg { width: 8px; height: 8px; }
.task.current { background: #4d5961; }
.tray { flex: none; display: flex; align-items: center; gap: 5px; margin-left: auto; padding-right: 12px; font-size: 7px; }
.tray svg { width: 8px; height: 8px; }
.tray svg.big { width: 10px; height: 10px; }
.tray time { margin-right: 6px; font-size: 6px; }
```
FILE: script.js
```js
const countries = [
  ["US", "4,065,477", "27,175", "39,399,703", "642,096"],
  ["India", "1,045,823", "13,239", "32,857,937", "439,529"],
  ["Iran", "1,006,149", "16,199", "5,055,512", "108,988"],
  ["United Kingdom", "876,046", "2,766", "6,856,991", "133,066"],
  ["Brazil", "777,682", "21,543", "20,804,215", "581,150"],
  ["France", "595,730", "14,102", "6,868,060", "126,335"],
  ["Turkey", "589,760", "5,233", "6,412,247", "57,000"],
  ["Malaysia", "581,906", "7,087", "1,786,004", "17,191"],
  ["Indonesia", "567,571", "33,040", "4,100,138", "133,676"],
  ["Russia", "564,646", "21,749", "6,857,243", "181,560"],
  ["Thailand"]
];
document.getElementById("countries").innerHTML = countries.map(([name, cases, deaths, allCases, allDeaths]) =>
  `<li><div><b>${name}</b></div>${cases ? `<div>28-Day: <b class="red">${cases}</b> | <b>${deaths}</b></div><div class="all">Totals: <b class="red">${allCases}</b> | <b>${allDeaths}</b></div>` : ""}</li>`).join("");

const charts = [
  { title: "Weekly Cases", size: 148, box: "738 90 281 148", left: 779, start: 780.7, top: 101.5, base: 219.5, max: 6, step: 1, unit: "M", fill: "#e60000", edge: "#8c0606",
    marks: [840, 909.5, 978], labelY: 229, titleX: 759, titleY: 160,
    data: [.06,.05,.06,.02,.01,.05,.09,.2,.42,.56,.63,.61,.59,.58,.62,.63,.76,.8,.88,.94,1.03,1.22,1.38,1.5,1.65,1.8,1.85,1.83,1.84,1.78,1.84,1.93,1.93,2.07,2.1,2.1,2.38,2.55,3.06,3.58,4.02,4.1,4.22,4.15,4.4,5.25,4.55,4.05,4.38,5.15,4.8,4.2,3.78,3.25,2.77,2.57,2.76,2.82,3,3.42,3.96,4.18,4.77,5.42,5.83,5.73,5.5,4.8,4.12,3.53,3,2.72,2.57,2.65,2.73,3.1,3.62,3.82,4.18,4.48,4.6,4.64,4.65] },
  { title: "Weekly Deaths", size: 155, box: "738 238 281 155", left: 784, start: 785.5, top: 247.5, base: 376, max: 120, step: 20, unit: "k", fill: "#ffffff", edge: "#777777",
    marks: [843, 911.5, 978.5], labelY: 386, titleX: 759, titleY: 312,
    data: [2,2,2.2,2,2,2.4,4,10,22,39.5,50,50.5,45,40,39,36,34,32,33,34,38.5,34.5,35.5,38.5,42,42.5,43.5,45,44.5,42.5,41.5,40,43,39,39,40.5,41.5,38,42.5,48,59,65,71.5,74,78.5,79,83,74,81,94,99,102.5,102,91.5,83.5,70.5,69,66,63.5,68.5,73,74,87.5,88,94,97,94.5,89.5,87,80,74,77,63,58,55,57,57.5,71,66,68,69,82,71] },
  { title: "Weekly Doses Administered", size: 146, box: "738 393 281 146", left: 786.5, start: 787.5, top: 403, base: 521.5, max: 400, step: 100, unit: "M", fill: "#38a800", edge: "#226306",
    marks: [844.5, 912, 979], labelY: 531, titleX: 759, titleY: 462,
    data: [...Array(46).fill(1.5),3,5,12,16,20,27,36,36,47,38,51,53,73,76,108,117,130,121,121,148,140,172,201,228,247,237,250,330,284,258,218,218,303,297,252,263,284] }
];
document.getElementById("charts").innerHTML = charts.map(c => {
  const y = v => c.base - (c.base - c.top) * v / c.max;
  const w = (1002 - c.start) / c.data.length;
  let grid = "", ticks = "", text = "", fills = "", edges = "";
  for (let v = 0; v <= c.max; v += c.step) {
    grid += `M${c.left} ${y(v)}H1001`;
    ticks += `M${c.left - 3} ${y(v)}h3`;
    text += `<text class="value" x="${c.left - 6}" y="${y(v) + 2}">${v ? v + c.unit : 0}</text>`;
  }
  c.marks.forEach((m, i) => {
    grid += `M${m} ${c.base}V${c.top}`;
    text += `<text x="${m + 1}" y="${c.labelY}"${i === 1 ? ' class="year"' : ""}>${i === 1 ? "2021" : "Jul"}</text>`;
  });
  c.data.forEach((v, i) => {
    const x = c.start + i * w;
    fills += `M${x} ${c.base}V${y(v)}h${w}V${c.base}z`;
    edges += `M${x + w} ${c.base}V${y(v)}`;
  });
  return `<svg style="flex: ${c.size} 1 0" viewBox="${c.box}" role="img" aria-label="${c.title}"><path class="grid" d="${grid}"/><path d="${fills}" fill="${c.fill}"/><path d="${edges}" stroke="${c.edge}" stroke-width=".7"/><path class="axis" d="M${c.left} ${c.top}V${c.base}H1002${ticks}"/>${text}<text class="title" x="${c.titleX}" y="${c.titleY}" transform="rotate(-90 ${c.titleX} ${c.titleY})">${c.title}</text></svg>`;
}).join("");

// Reported places: x, y, radius
const places = [
  [182,412,2],[212,400,3],[223,403,2.7],[243,405,2.9],[213,418,3],[231,426,3],[204,390,2],[197,386,3],[192,388,2],[201,384,2],[186,380,2],[187,393,1.5],[218,407,1.5],[216,422,1],[251,384,1.4],[278,404,1.2],[366,392,1.3],[329,452,1.4],[378,452,1.3],[288,479,1.5],[249,438,1.2],[279,487,1],[324,492,1],[252,366,2],[257,373,2],[261,370,2],[264,369,2],[267,368,2.2],[270,367,2.2],[272,363,1.8],[271,358,1.6],[274,352,1.5],[276,337,1],[217,320,1.4],[216,344,1.5],[191,326,1],[201,333,1],[184,330,1.2],[225,330,.9],[234,331,.9],[254,330,.9],[265,333,1],[260,340,.9],[263,348,1.2],[301,318,1],
  [411,327,1.2],[428,327,1.2],[444,330,1],[417,294,.8],[493,329,1.3],[475,333,1.2],[400,296,.8],[420,342,2.4],[419,349,2.4],[423,365,3],[431,349,1.4],[437,345,1.4],[436,355,1.7],[444,360,1.7],[427,359,1.6],[432,366,1.6],[441,367,1.4],[448,352,1.4],[454,347,1.5],[454,357,1.7],[461,351,1.8],[462,359,1.9],[469,355,2],[456,366,2],[464,367,2.2],[463,374,2],[470,363,2.2],[470,372,2.2],[477,371,2.2],[481,365,2.3],[486,359,2.4],[491,354,2.4],[476,358,2.2],[476,351,2.3],[483,353,2],[496,350,1.8],[481,381,3.3],[487,391,2.6],[478,409,2],[451,393,3],[446,390,2],[454,395,2.6],[459,397,2],[469,402,2],[474,401,1.5],[435,375,1],[441,379,1],[438,384,1.2],[444,386,1.4],[503,396,1.5],[510,397,1.4],[512,404,1.5],[507,398,1],[494,395,1],[483,397,1],[506,372,.5],[570,399,.8],
  [491,412,2.5],[493,416,2.6],[490,418,2.3],[488,420,2],[504,414,1.5],[511,428,1.3],[521,428,1.3],[536,432,1.5],[544,432,1.5],[549,434,2.2],[548,438,2],[538,443,1.6],[530,449,2.2],[537,453,2.2],[543,454,1.2],[534,461,2.7],[539,460,2.2],[526,464,2.2],[528,467,1.8],[527,472,1.8],[508,488,3],[522,456,1.2],[518,441,1.2],[514,436,1],[520,477,1.1],[508,449,1.3],[515,462,1],[515,516,.9],[497,518,.7],[497,480,1],[496,487,1],[495,494,1],[487,440,1],[486,428,1.4],
  [521,345,1],[576,294,1.2],[540,265,.6],[594,373,2.8],[619,370,2.2],[607,380,1.3],[631,383,1.5],[651,382,1],[589,392,1.2],[583,403,1.2],[597,413,1.5],[604,412,1.5],[608,411,1.2],[618,410,1.2],[637,420,1.2],[654,422,1.8],[663,424,1.7],[666,411,1.7],[650,428,1.5],[647,444,1.5],[657,445,1.3],[632,442,1],[642,459,2],[649,454,1.5],[640,473,3],[633,460,1.2],[653,466,1.5],[647,471,1],[675,417,.9],[716,421,1.2],[689,458,1.3],[692,456,1.1],[689,432,1],[578,379,1],
  [658,374,3],[671,371,2.6],[686,372,3.2],[673,387,1.5],[658,360,3.3],[706,341,2.8],[662,321,2.3],[603,330,2.8],[599,322,2],[593,328,1.8],[608,345,3.2],[613,332,4],[617,334,3],[596,358,3],[592,359,2],[617,308,1.6],[638,359,2.2],[671,353,2.5],[677,358,2.2],[675,350,1.8],[618,321,2],[644,304,1.2],[656,282,1.2],[670,299,1],[687,297,1],[717,285,.9],[710,307,1],[651,310,1.5],[665,310,1],[698,314,1.2],[690,313,1],[715,328,1.2],[725,324,1],[680,313,.9],[690,329,1],[703,355,1.2],[719,358,1],[702,371,1.6],[709,384,1.3],[720,394,2.3],[726,390,1.5],[721,401,1.8],[721,408,3],[726,412,2.3],[677,378,1.5],[687,388,1.2],[682,395,1],[678,380,1],[712,369,2]
];
// Dense regions: centre, half-size, count, radius, tilt
const regions = [
  [464,361,22,12,18,1.2,0],[484,359,11,6,18,1.6,-.6],
  [448,388,13,8,34,.8,.5],[491,432,8,20,45,.7,0],[492,417,6,8,20,1,0],[520,437,26,18,25,.6,0],[498,402,16,5,16,.8,0],
  [600,356,11,7,28,1.1,0],[622,346,10,10,35,1.1,0],[643,336,22,14,70,.8,0],[668,325,22,14,55,.9,0],[638,352,10,8,30,1,0],[629,316,6,10,18,.8,0],
  [703,320,22,14,16,.7,0],[665,366,18,8,18,1,0],[628,358,8,7,18,1.2,0],[718,378,10,14,45,1.1,0],
  [200,383,18,6,30,.8,0],[222,370,20,14,14,.5,0],[232,330,40,10,14,.5,0],[618,405,30,14,20,.6,0],[643,445,18,20,24,.6,0],[499,480,4,30,20,.6,0]
];
let seed = 19;
const rand = () => (seed = (seed * 16807) % 2147483647) / 2147483647;
for (const [cx, cy, rx, ry, n, r, tilt] of regions) {
  for (let i = 0; i < n; i++) {
    const a = rand() * 6.283, d = Math.sqrt(rand());
    const dx = Math.cos(a) * d * rx;
    places.push([(cx + dx).toFixed(1), (cy + Math.sin(a) * d * ry + dx * tilt).toFixed(1), (r * (.6 + rand() * .8)).toFixed(1)]);
  }
}
document.getElementById("cases").innerHTML = places.map(p => `<circle cx="${p[0]}" cy="${p[1]}" r="${p[2]}"/>`).join("");
```
